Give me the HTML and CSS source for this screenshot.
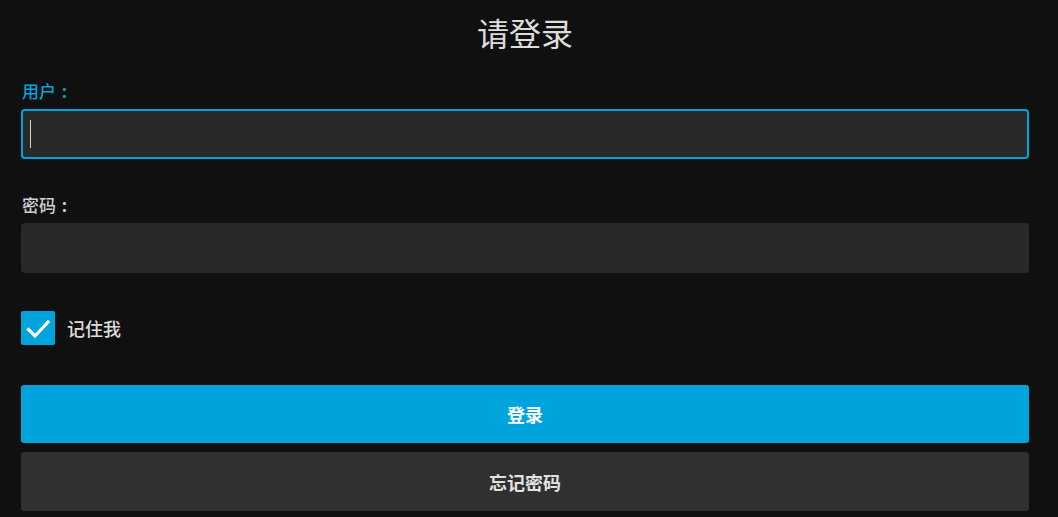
FILE: index.html
```html
<!DOCTYPE html>
<html lang="zh-CN">
<head>
<meta charset="utf-8">
<title>请登录</title>
<link rel="stylesheet" href="styles.css">
</head>
<body>
<form class="login">
  <h1 class="title">请登录</h1>
  <label class="label label-active" for="user">用户<span class="colon">:</span></label>
  <div class="input input-focus" id="user"><span class="caret"></span></div>
  <label class="label label-pw" for="pw">密码<span class="colon">:</span></label>
  <div class="input" id="pw"></div>
  <div class="remember">
    <span class="checkbox">
      <svg width="34" height="34" viewBox="0 0 34 34"><path d="M7.5 18.5 L14 25 L27 11" fill="none" stroke="#fff" stroke-width="3.2" stroke-linecap="square"/></svg>
    </span>
    <span class="remember-text">记住我</span>
  </div>
  <button type="button" class="btn btn-primary">登录</button>
  <button type="button" class="btn btn-secondary">忘记密码</button>
</form>
</body>
</html>
```
FILE: styles.css
```css
html, body {
  margin: 0;
  padding: 0;
  background: #101010;
  height: 100%;
}
body {
  font-family: "Noto Sans", "Noto Sans CJK SC", sans-serif;
  color: #ddd;
}
.login {
  display: flex;
  flex-direction: column;
  margin: 0 29px 0 21px;
}
.title {
  margin: 0;
  padding-top: 15px;
  font-size: 32px;
  line-height: 38px;
  font-weight: 400;
  text-align: center;
  color: #ddd;
}
.label {
  font-size: 17px;
  line-height: 20px;
  height: 20px;
  font-weight: 500;
  color: #cfcfcf;
  padding-left: 1px;
}
.colon {
  display: inline-block;
  width: 17px;
  text-align: center;
  font-weight: 700;
}
.label-active {
  margin-top: 29px;
  color: #00a4dc;
}
.label-pw {
  margin-top: 37px;
}
.input {
  margin-top: 7px;
  height: 50px;
  box-sizing: border-box;
  background: #292929;
  border-radius: 4px;
  display: flex;
  align-items: center;
}
.input-focus {
  border: 2px solid #00a4dc;
  padding-left: 7px;
}
.caret {
  display: block;
  width: 1px;
  height: 28px;
  background: #cfcfcf;
}
.remember {
  margin-top: 38px;
  display: flex;
  align-items: center;
  gap: 12px;
}
.checkbox {
  width: 34px;
  height: 34px;
  background: #00a4dc;
  border-radius: 2px;
  display: block;
}
.checkbox svg {
  display: block;
}
.remember-text {
  font-size: 18px;
  font-weight: 500;
  color: #ddd;
}
.btn {
  border: 0;
  border-radius: 3px;
  font-family: "Noto Sans", "Noto Sans CJK SC", sans-serif;
  font-size: 18px;
  font-weight: 700;
  width: 100%;
  padding: 0;
}
.btn-primary {
  margin-top: 40px;
  height: 58px;
  background: #00a4dc;
  color: #fff;
}
.btn-secondary {
  margin-top: 9px;
  height: 59px;
  background: #303030;
  color: #e2e2e2;
}
```
